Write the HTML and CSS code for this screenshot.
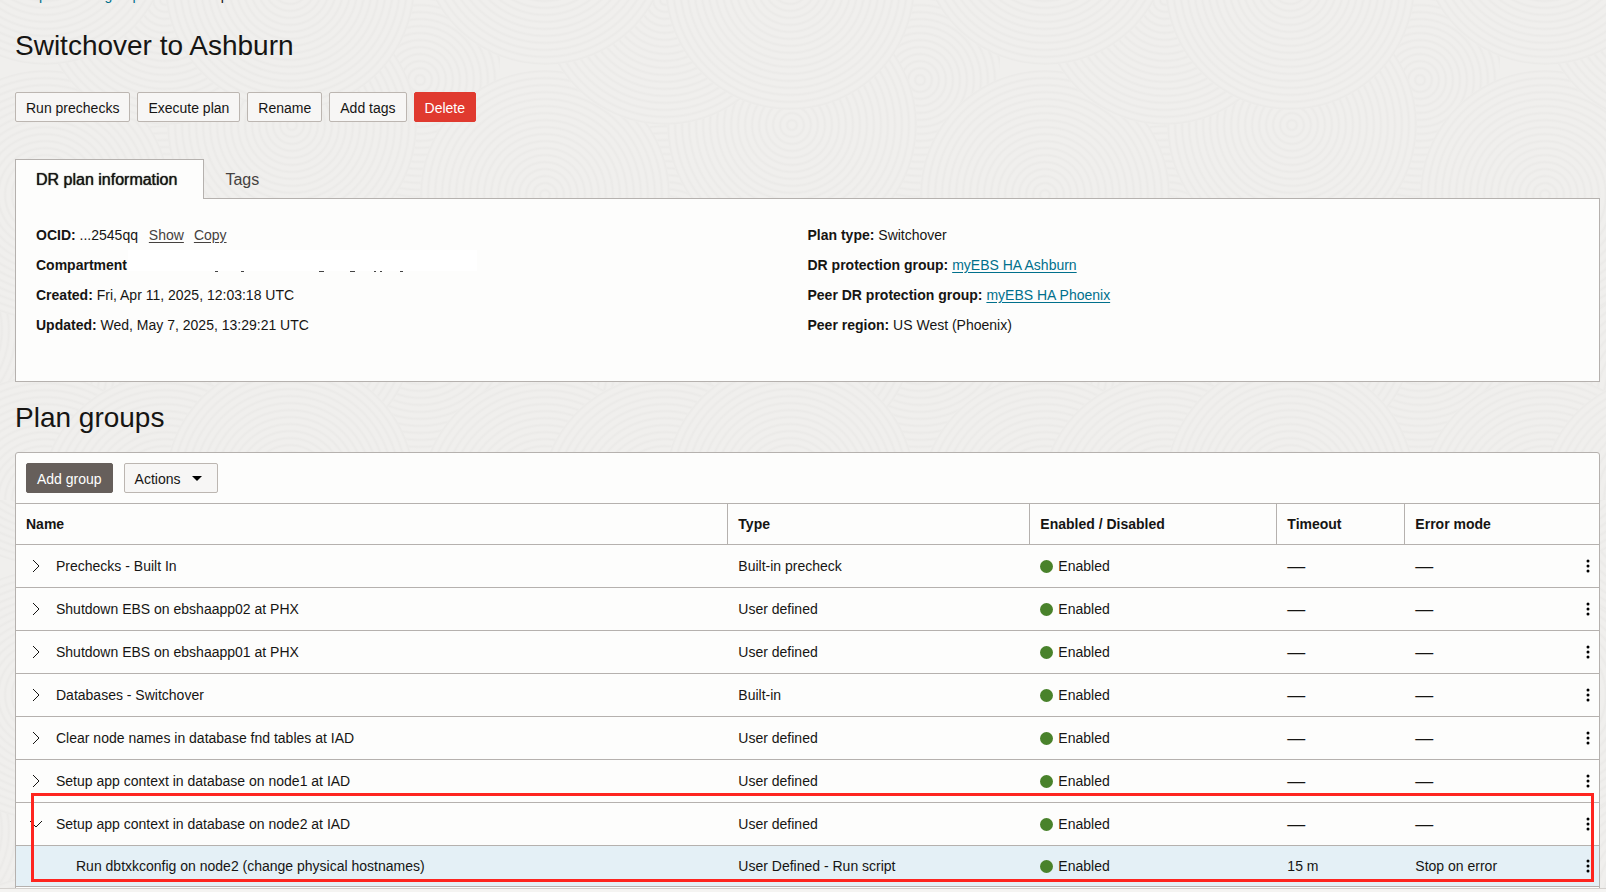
FILE: index.html
```
<!DOCTYPE html>
<html lang="en">
<head>
<meta charset="utf-8">
<title>Switchover to Ashburn</title>
<link rel="stylesheet" href="styles.css">
</head>
<body>
<svg class="sprite" aria-hidden="true">
  <symbol id="right" viewBox="0 0 14 14"><path d="M4 1l6 6-6 6" fill="none" stroke="currentColor"/></symbol>
  <symbol id="down" viewBox="0 0 14 14"><path d="M1 4l6 6 6-6" fill="none" stroke="currentColor"/></symbol>
  <symbol id="more" viewBox="0 0 4 14"><circle cx="2" cy="2" r="1.5"/><circle cx="2" cy="7" r="1.5"/><circle cx="2" cy="12" r="1.5"/></symbol>
</svg>
<div class="app">
  <main class="content">
    <nav class="crumbs" aria-label="Breadcrumb"><a href="#">DR protection group details</a><span>DR plan details</span></nav>
    <h1 class="title">Switchover to Ashburn</h1>
    <div class="actions">
      <button class="btn">Run prechecks</button>
      <button class="btn">Execute plan</button>
      <button class="btn">Rename</button>
      <button class="btn">Add tags</button>
      <button class="btn btn-danger">Delete</button>
    </div>
    <div class="tabs" role="tablist">
      <button class="tab tab-active" role="tab" aria-selected="true">DR plan information</button>
      <button class="tab" role="tab" aria-selected="false">Tags</button>
    </div>
    <section class="info">
      <div class="info-col">
        <div><b>OCID:</b> ...2545qq <a class="plain" href="#">Show</a><a class="plain" href="#">Copy</a></div>
        <div class="compartment"><b>Compartment</b><svg class="redacted" viewBox="0 0 349 22" aria-hidden="true"><rect width="349" height="21" fill="#fff"/><path d="M87 21.500h3M113 21.500h3M191 21.500h5M222 21.500h5M246 21.500h2M252 21.500h2M272 21.500h3" stroke="#444"/></svg></div>
        <div><b>Created:</b> Fri, Apr 11, 2025, 12:03:18 UTC</div>
        <div><b>Updated:</b> Wed, May 7, 2025, 13:29:21 UTC</div>
      </div>
      <div class="info-col">
        <div><b>Plan type:</b> Switchover</div>
        <div><b>DR protection group:</b> <a href="#">myEBS HA Ashburn</a></div>
        <div><b>Peer DR protection group:</b> <a href="#">myEBS HA Phoenix</a></div>
        <div><b>Peer region:</b> US West (Phoenix)</div>
      </div>
    </section>
    <h2 class="title">Plan groups</h2>
    <section class="panel">
      <div class="toolbar">
        <button class="btn btn-dark">Add group</button>
        <button class="btn btn-menu">Actions <svg class="caret" viewBox="0 0 10 5" aria-hidden="true"><path d="M0 0h10L5 5z"/></svg></button>
      </div>
      <table class="groups">
        <thead>
          <tr><th class="c-name">Name</th><th class="c-type">Type</th><th class="c-state">Enabled / Disabled</th><th class="c-time">Timeout</th><th class="c-error">Error mode</th><th class="c-more" aria-label="Row actions"></th></tr>
        </thead>
        <tbody>
          <tr><td><div class="name"><button class="icon" aria-label="Expand"><svg class="chev"><use href="#right"/></svg></button>Prechecks - Built In</div></td><td>Built-in precheck</td><td><span class="state">Enabled</span></td><td><span class="dash">—</span></td><td><span class="dash">—</span></td><td><button class="icon" aria-label="More"><svg class="more"><use href="#more"/></svg></button></td></tr>
          <tr><td><div class="name"><button class="icon" aria-label="Expand"><svg class="chev"><use href="#right"/></svg></button>Shutdown EBS on ebshaapp02 at PHX</div></td><td>User defined</td><td><span class="state">Enabled</span></td><td><span class="dash">—</span></td><td><span class="dash">—</span></td><td><button class="icon" aria-label="More"><svg class="more"><use href="#more"/></svg></button></td></tr>
          <tr><td><div class="name"><button class="icon" aria-label="Expand"><svg class="chev"><use href="#right"/></svg></button>Shutdown EBS on ebshaapp01 at PHX</div></td><td>User defined</td><td><span class="state">Enabled</span></td><td><span class="dash">—</span></td><td><span class="dash">—</span></td><td><button class="icon" aria-label="More"><svg class="more"><use href="#more"/></svg></button></td></tr>
          <tr><td><div class="name"><button class="icon" aria-label="Expand"><svg class="chev"><use href="#right"/></svg></button>Databases - Switchover</div></td><td>Built-in</td><td><span class="state">Enabled</span></td><td><span class="dash">—</span></td><td><span class="dash">—</span></td><td><button class="icon" aria-label="More"><svg class="more"><use href="#more"/></svg></button></td></tr>
          <tr><td><div class="name"><button class="icon" aria-label="Expand"><svg class="chev"><use href="#right"/></svg></button>Clear node names in database fnd tables at IAD</div></td><td>User defined</td><td><span class="state">Enabled</span></td><td><span class="dash">—</span></td><td><span class="dash">—</span></td><td><button class="icon" aria-label="More"><svg class="more"><use href="#more"/></svg></button></td></tr>
          <tr><td><div class="name"><button class="icon" aria-label="Expand"><svg class="chev"><use href="#right"/></svg></button>Setup app context in database on node1 at IAD</div></td><td>User defined</td><td><span class="state">Enabled</span></td><td><span class="dash">—</span></td><td><span class="dash">—</span></td><td><button class="icon" aria-label="More"><svg class="more"><use href="#more"/></svg></button></td></tr>
          <tr><td><div class="name"><button class="icon" aria-label="Collapse"><svg class="chev"><use href="#down"/></svg></button>Setup app context in database on node2 at IAD</div></td><td>User defined</td><td><span class="state">Enabled</span></td><td><span class="dash">—</span></td><td><span class="dash">—</span></td><td><button class="icon" aria-label="More"><svg class="more"><use href="#more"/></svg></button></td></tr>
          <tr class="step"><td><div class="name">Run dbtxkconfig on node2 (change physical hostnames)</div></td><td>User Defined - Run script</td><td><span class="state">Enabled</span></td><td>15 m</td><td>Stop on error</td><td><button class="icon" aria-label="More"><svg class="more"><use href="#more"/></svg></button></td></tr>
        </tbody>
      </table>
      <div class="highlight"></div>
    </section>
  </main>
  <footer class="footer"></footer>
</div>
</body>
</html>
```
FILE: styles.css
```
* { box-sizing: border-box; }

body {
  margin: 0;
  color: #161513;
  font: 14px/20px "Helvetica Neue", "Liberation Sans", Arial, sans-serif;
}

button { font: inherit; color: inherit; cursor: pointer; }
a { color: #00708c; text-underline-offset: 2px; }
.sprite { display: none; }

.app { display: flex; flex-direction: column; height: 100vh; }

.content {
  flex: 1;
  min-height: 0;
  overflow: auto;
  scrollbar-width: none;
  padding: 0 6px 0 15px;
  background: #f0efed url("data:image/svg+xml,%3Csvg xmlns='http://www.w3.org/2000/svg' xmlns:xlink='http://www.w3.org/1999/xlink' width='500' height='500'%3E%3Cdefs%3E%3CradialGradient id='g' gradientUnits='userSpaceOnUse' cx='0' cy='0' r='7' spreadMethod='repeat'%3E%3Cstop offset='0' stop-color='%23f0efed'/%3E%3Cstop offset='.4' stop-color='%23f0efed'/%3E%3Cstop offset='.7' stop-color='%23ebeae8'/%3E%3Cstop offset='1' stop-color='%23f0efed'/%3E%3C/radialGradient%3E%3Ccircle id='c' r='125' fill='url(%23g)'/%3E%3C/defs%3E%3Cuse xlink:href='%23c' x='420' y='80'/%3E%3Cuse xlink:href='%23c' x='420' y='330'/%3E%3Cuse xlink:href='%23c' x='-80' y='330'/%3E%3Cuse xlink:href='%23c' x='165' y='250'/%3E%3Cuse xlink:href='%23c' x='292' y='125'/%3E%3Cuse xlink:href='%23c' x='165' y='397'/%3E%3Cuse xlink:href='%23c' x='45' y='195'/%3E%3Cuse xlink:href='%23c' x='545' y='195'/%3E%3Cuse xlink:href='%23c' x='290' y='330'/%3E%3Cuse xlink:href='%23c' x='45' y='500'/%3E%3Cuse xlink:href='%23c' x='545' y='500'/%3E%3Cuse xlink:href='%23c' x='165' y='0'/%3E%3Cuse xlink:href='%23c' x='165' y='500'/%3E%3Cuse xlink:href='%23c' x='290' y='-15'/%3E%3Cuse xlink:href='%23c' x='290' y='485'/%3E%3Cuse xlink:href='%23c' x='45' y='-60'/%3E%3Cuse xlink:href='%23c' x='545' y='-60'/%3E%3C/svg%3E");
}

.crumbs { display: flex; gap: 12px; margin-top: -15px; }
.crumbs a { text-decoration: none; }

.title { margin: 0; font-size: 28px; line-height: 36px; font-weight: 400; }
h1.title { padding-top: 23px; }
h2.title { padding: 18px 0 16px; }

.actions { display: flex; gap: 7px; margin: 28px 0 37px; }

.btn {
  height: 30px;
  padding: 1px 10px 0;
  border: 1px solid #bcb6b1;
  border-radius: 2px;
  background: #f7f6f5;
}
.btn-danger { border-color: #e03a2f; background: #e03a2f; color: #fff; }
.btn-dark { border-color: #665f5b; background: #665f5b; color: #fff; }
.btn-menu { display: flex; align-items: center; gap: 11px; padding-right: 15px; }
.caret { width: 10px; height: 5px; }

.tabs { display: flex; align-items: stretch; height: 40px; margin-bottom: -1px; }
.tab {
  padding: 0 20px;
  border: 1px solid transparent;
  border-bottom: 0;
  background: none;
  color: #45413e;
  font-size: 16px;
}
.tab-active {
  position: relative;
  padding-right: 26px;
  border-color: #b5b1ae;
  background: #fdfdfc;
  color: #161513;
  text-shadow: 0 0 1px #161513;
}

.info {
  display: grid;
  grid-template-columns: 1fr 1fr;
  min-height: 184px;
  padding: 21px 20px;
  border: 1px solid #b5b1ae;
  background: #fdfdfc;
  line-height: 30px;
}
.plain { margin-left: 7px; color: #45413e; }
.plain + .plain { margin-left: 10px; }
.compartment { display: flex; align-items: flex-start; }
.redacted { width: 349px; height: 22px; margin-left: 1px; }

.panel {
  position: relative;
  padding-bottom: 40px;
  border: 1px solid #b5b1ae;
  border-radius: 3px;
  background: #fdfdfc;
}
.toolbar { display: flex; gap: 11px; padding: 10px; }

.groups { width: 100%; table-layout: fixed; border-collapse: separate; border-spacing: 0; }
.groups th {
  height: 42px;
  padding: 0 10px;
  border: solid #b5b1ae;
  border-width: 1px 1px 1px 0;
  text-align: left;
}
.groups th:nth-last-child(-n+2) { border-right: 0; }
.groups td { height: 43px; padding: 0 10px; border-bottom: 1px solid #b5b1ae; white-space: nowrap; }
.groups td:last-child { padding: 0 9px 0 0; }
.c-name { width: 45%; }
.c-type { width: 302px; }
.c-state { width: 247px; }
.c-time { width: 128px; }
.c-more { width: 30px; }

.name { display: flex; align-items: center; gap: 13px; padding-left: 3px; }
.icon { display: flex; margin-left: auto; padding: 0; border: 0; background: none; }
.name .icon { margin-left: 0; }
.chev { width: 14px; height: 14px; }
.more { width: 4px; height: 14px; }
.state { display: flex; align-items: center; gap: 5px; }
.state::before { content: ""; width: 13px; height: 13px; border-radius: 50%; background: #49822b; }
.dash { font-size: 18px; }
.step { background: #e4f0f6; }
.groups .step td { height: 41px; }
.step .name { padding-left: 50px; }

/* Callout frame around the expanded group and its step */
.highlight {
  position: absolute;
  top: 340px;
  left: 15px;
  right: 5px;
  height: 89px;
  border: 3px solid #fe251f;
  pointer-events: none;
}

.footer { height: 4px; border-top: 1px solid #d4d1ce; background: #f5f4f2; }
```
